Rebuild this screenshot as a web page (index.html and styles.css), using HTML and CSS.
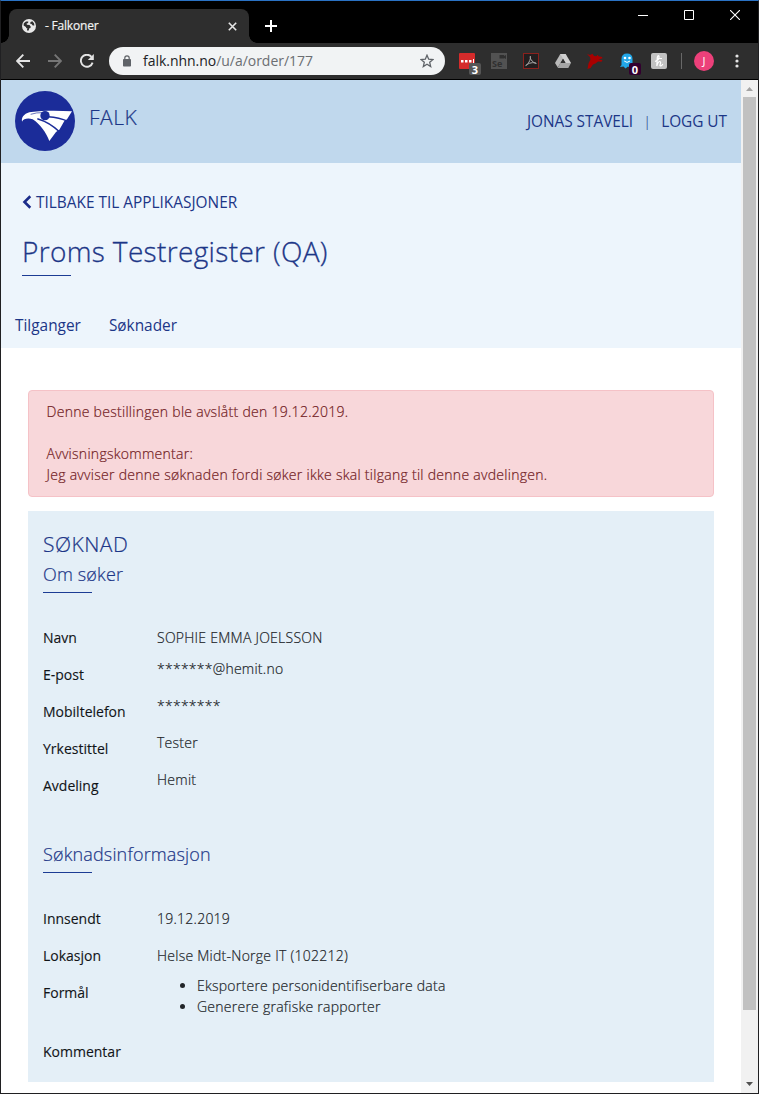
FILE: index.html
```html
<!DOCTYPE html>
<html lang="no">
<head>
<meta charset="utf-8">
<title>- Falkoner</title>
<link rel="stylesheet" href="styles.css">
</head>
<body>
<div class="window">
  <div class="titlebar">
    <div class="tab">
      <svg class="globe" viewBox="0 0 14 14"><circle cx="7" cy="7" r="7" fill="#e8e8e8"/><path d="M1.800 4.300L4 2.500L6.300 2.400L6.100 4L4.600 4.500L4.900 5.800L7.500 6L8.700 7.500L8.500 9L7 9.400L6.900 11.300L5.400 11.800L4.900 10.600L5.600 9.700L4.300 9.100L3.900 8L1.600 6.500zM8.600 3.100L10.300 2.300L12 4.300L12.400 6.600L10.800 6.400L9.500 5.100L8 4.600z" fill="#2e2e2e"/></svg>
      <span class="tab-title">- Falkoner</span>
      <svg class="tab-close" viewBox="0 0 9 9"><path d="M.8 .8L8.200 8.200M8.200 .8L.8 8.200" stroke="#e6e6e6" stroke-width="1.600"/></svg>
    </div>
    <svg class="plus" viewBox="0 0 12 12"><path d="M6 0V12M0 6H12" stroke="#fff" stroke-width="2"/></svg>
    <div class="controls">
      <svg width="10" height="10" viewBox="0 0 10 10"><path d="M0 5.500H10" stroke="#fff"/></svg>
      <svg width="10" height="10" viewBox="0 0 10 10"><path d="M.5 .5H9.500V9.500H.5z" stroke="#fff" fill="none"/></svg>
      <svg width="10" height="10" viewBox="0 0 10 10"><path d="M0 0L10 10M10 0L0 10" stroke="#fff" stroke-width="1.100"/></svg>
    </div>
  </div>
  <div class="toolbar">
    <svg class="nav" viewBox="0 0 14 14"><path d="M14 7H1.500M7.300 .7L1 7L7.300 13.300" fill="none" stroke="#e4e4e4" stroke-width="1.900"/></svg>
    <svg class="nav" viewBox="0 0 14 14"><path d="M0 7H12.500M6.700 .7L13 7L6.700 13.300" fill="none" stroke="#767676" stroke-width="1.900"/></svg>
    <svg class="nav" viewBox="0 0 14 14"><path d="M12.600 8.600A6 6 0 1 1 11.500 2.900" fill="none" stroke="#e4e4e4" stroke-width="1.900"/><path d="M13.800 0V6H7.800z" fill="#e4e4e4"/></svg>
    <div class="omnibox">
      <svg class="lock" viewBox="0 0 8 12"><rect y="4" width="8" height="7.500" rx=".8" fill="#5f6368"/><path d="M1.800 4.500V3A2.200 2.200 0 0 1 6.200 3V4.500" fill="none" stroke="#5f6368" stroke-width="1.200"/></svg>
      <span class="url"><span class="host">falk.nhn.no</span>/u/a/order/177</span>
      <svg class="star" viewBox="0 0 14 14"><path d="M7 1.200L8.700 5.200L13 5.500L9.700 8.300L10.700 12.600L7 10.300L3.300 12.600L4.300 8.300L1 5.500L5.300 5.200z" fill="none" stroke="#5f6368" stroke-width="1.300"/></svg>
    </div>
    <div class="extensions">
      <div class="ext"><svg viewBox="0 0 16 16"><rect width="16" height="16" rx="1" fill="#d52b2b"/><path d="M2 7h2.500v2.500H2zM6 7h2.500v2.500H6zM10 7h2.500v2.500H10zM14 6h1v4h-1z" fill="#fff"/></svg><span class="badge badge-gray">3</span></div>
      <div class="ext"><svg viewBox="0 0 16 16"><rect width="16" height="16" fill="#525252"/><text x="1" y="14" class="se">Se</text><path d="M8.500 2H13V3L15 2V6L13 5V5.500H8.500z" fill="#303030"/></svg></div>
      <div class="ext"><svg viewBox="0 0 16 16"><rect x=".5" y=".5" width="15" height="15" fill="#231f20" stroke="#8b211d"/><path d="M2.700 12.500C4.500 12.300 8.200 6.500 7.400 3.300C6.400 4.300 8.600 9.500 13.300 10.400C10.500 8.800 5.500 10 2.700 12.500z" fill="none" stroke="#aaa" stroke-width="1"/></svg></div>
      <div class="ext"><svg viewBox="0 0 16 16"><path d="M5.300 1H10.700L8 5.700L2.800 14.500L0 10z" fill="#b9b9b9"/><path d="M10.700 1L16 10H10.600L5.300 1z" fill="#d0d0d0"/><path d="M5.300 10H16L13.300 15H2.700z" fill="#a5a5a5"/><path d="M8 6L10.400 10H5.600z" fill="#333"/></svg></div>
      <div class="ext"><svg viewBox="0 0 16 16"><path d="M0 1L3 2L5.500 .8L7 3L9.500 3.300L10.500 1.800L11.700 3.300L15 4L15.500 5.300L11.500 6.500L15.500 7.300L14.500 8.700L11 8.500L8.500 10.500L6 11.500L3.500 15L.5 16L1.500 10.500L3.500 6.500L3 4z" fill="#a90000"/></svg></div>
      <div class="ext"><svg viewBox="0 0 16 16"><path d="M2.500 12V6Q2.500 .5 8 .5T13.500 6V13L11.500 15L9 13.500L6.500 15.500L4.500 13.500L1 14z" fill="#22a7e8"/><circle cx="6" cy="5" r="1.300" fill="#fff"/><circle cx="10.500" cy="5" r="1.300" fill="#fff"/><path d="M5.200 8Q8 10.800 11 8" fill="none" stroke="#fff"/></svg><span class="badge badge-purple">0</span></div>
      <div class="ext"><svg viewBox="0 0 16 16"><rect width="16" height="16" rx="2" fill="#c1c1c1"/><path d="M4 8.500Q8.500 6.500 8 3.500Q7 1.500 6.300 4.500L5.800 13Q7.200 8.300 8.800 8.500T8.900 12.300Q10.300 14 11.800 11M8.500 5.500H11" fill="none" stroke="#fff" stroke-width="1.200"/></svg></div>
    </div>
    <div class="divider"></div>
    <div class="avatar">J</div>
    <svg class="menu" viewBox="0 0 4 14"><circle cx="2" cy="2" r="1.600" fill="#e4e4e4"/><circle cx="2" cy="7" r="1.600" fill="#e4e4e4"/><circle cx="2" cy="12" r="1.600" fill="#e4e4e4"/></svg>
  </div>
  <div class="viewport">
    <main class="page">
      <header class="header">
        <svg class="logo" viewBox="45 47 180 180"><circle cx="135" cy="137" r="90" fill="#1b2c99"/><path d="M66 139C63 122 78 112 94 110C130 105 174 105 216 108L201 132L193 137L178 163L168 170L148 197C138 172 122 148 98 132C86 127 70 129 66 139z" fill="#fff"/><path d="M144 124Q178 126 204 138M112 130Q150 141 180 171" fill="none" stroke="#1b2c99" stroke-width="4.500"/><path d="M92 117Q110 111 128 112" fill="none" stroke="#1b2c99" stroke-width="2"/><circle cx="135" cy="121" r="14" fill="#1b2c99"/></svg>
        <span class="brand">FALK</span>
        <div class="user"><a>JONAS STAVELI</a><span class="sep">|</span><a>LOGG UT</a></div>
      </header>
      <section class="hero">
        <a class="back"><svg viewBox="0 0 10 14"><path d="M8.300 1.300L2.500 7L8.300 12.700" fill="none" stroke="#1b2c8a" stroke-width="2.600"/></svg><span class="back-text">TILBAKE TIL APPLIKASJONER</span></a>
        <h1 class="title"><span>Proms Testregister (QA)</span></h1>
        <nav class="tabs"><a>Tilganger</a><a>Søknader</a></nav>
      </section>
      <section class="content">
        <div class="alert">
          <p>Denne bestillingen ble avslått den 19.12.2019.</p>
          <p class="spaced">Avvisningskommentar:</p>
          <p>Jeg avviser denne søknaden fordi søker ikke skal tilgang til denne avdelingen.</p>
        </div>
        <div class="panel">
          <h2 class="panel-title">SØKNAD</h2>
          <h3 class="panel-sub">Om søker</h3>
          <dl class="fields">
            <dt>Navn</dt><dd class="level">SOPHIE EMMA JOELSSON</dd>
            <dt>E-post</dt><dd>*******@hemit.no</dd>
            <dt>Mobiltelefon</dt><dd>********</dd>
            <dt>Yrkestittel</dt><dd>Tester</dd>
            <dt>Avdeling</dt><dd>Hemit</dd>
          </dl>
          <h3 class="panel-sub">Søknadsinformasjon</h3>
          <dl class="fields">
            <dt>Innsendt</dt><dd class="level">19.12.2019</dd>
            <dt>Lokasjon</dt><dd class="level">Helse Midt-Norge IT (102212)</dd>
            <dt>Formål</dt><dd class="purpose"><ul><li>Eksportere personidentifiserbare data</li><li>Generere grafiske rapporter</li></ul></dd>
            <dt>Kommentar</dt><dd></dd>
          </dl>
        </div>
      </section>
    </main>
    <div class="scrollbar">
      <svg viewBox="0 0 17 17"><path d="M5 11L8.500 7L12 11z" fill="#a3a3a3"/></svg>
      <div class="thumb"></div>
      <svg viewBox="0 0 17 17"><path d="M5 6L8.500 10L12 6z" fill="#505050"/></svg>
    </div>
  </div>
</div>
</body>
</html>
```
FILE: styles.css
```css
* { box-sizing: border-box; }
body { margin: 0; background: #1c1c1e; font-family: "Open Sans", sans-serif; font-size: 14px; line-height: 21px; }
svg { display: block; flex: none; }
h1, h2, h3, p, dl, dd, ul { margin: 0; padding: 0; }
.window { width: 759px; height: 1094px; border: 1px solid #202022; border-top-color: #2a72c4; overflow: hidden; display: flex; flex-direction: column; }

.titlebar { height: 42px; background: #000; display: flex; flex: none; }
.tab { width: 240px; height: 34px; margin: 8px 0 0 8px; padding: 0 12px 0 13px; background: #2e2e2e; border-radius: 8px 8px 0 0; display: flex; align-items: center; position: relative; color: #f2f2f2; }
.tab::before, .tab::after { content: ""; position: absolute; bottom: 0; width: 8px; height: 8px; }
.tab::before { left: -8px; background: radial-gradient(circle at 0 0, transparent 7.5px, #2e2e2e 8px); }
.tab::after { right: -8px; background: radial-gradient(circle at 100% 0, transparent 7.5px, #2e2e2e 8px); }
.globe { width: 14px; height: 14px; }
.tab-title { margin-left: 9px; font: 12px/16px "Open Sans", sans-serif; letter-spacing: -.2px; flex: 1; -webkit-text-stroke: .2px; }
.tab-close { width: 9px; height: 9px; }
.plus { width: 12px; height: 12px; margin: 19px 0 0 16px; }
.controls { display: flex; gap: 36px; margin: 9px 18px 0 auto; }

.toolbar { height: 37px; flex: none; background: #2e2e2e; border-bottom: 1px solid #000; display: flex; align-items: center; padding: 0 19.500px 0 15px; }
.nav { width: 14px; height: 14px; margin-right: 18px; }
.omnibox { width: 336px; height: 28px; margin-left: -3px; border-radius: 14px; background: #f1f3f4; display: flex; align-items: center; padding: 0 11px 0 14px; }
.lock { width: 8px; height: 12px; }
.url { flex: 1; margin-left: 12px; font: 14px/20px "Open Sans", sans-serif; letter-spacing: -.03em; color: #6b6e72; letter-spacing: -.03px; }
.host { color: #202124; }
.star { width: 14px; height: 14px; }
.extensions { display: flex; gap: 16px; margin-left: 14px; }
.ext { width: 16px; height: 16px; position: relative; }
.ext svg { width: 16px; height: 16px; }
.se { font: bold 9px "Open Sans", sans-serif; fill: #303030; }
.badge { position: absolute; left: 10px; top: 10px; width: 12px; height: 12px; border-radius: 2px; color: #fff; font: bold 11px/13px "Open Sans", sans-serif; text-align: center; }
.badge-gray { background: #555; }
.badge-purple { background: #32002f; }
.divider { width: 1px; height: 16px; background: #686868; margin-left: 14px; }
.avatar { width: 20px; height: 20px; margin-left: 12px; border-radius: 50%; background: #ec407a; color: #fff; font: 11px/20px "Open Sans", sans-serif; text-align: center; }
.menu { width: 4px; height: 14px; margin-left: auto; }

.viewport { flex: 1; min-height: 0; display: flex; }
.page { width: 740px; background: #fff; overflow: hidden; }
.header { height: 83px; background: #c0d8ed; display: flex; align-items: center; padding: 0 14px; color: #1c3687; }
.logo { width: 60px; height: 60px; margin-top: -2px; }
.brand { margin: -9px 0 0 14px; font-size: 21px; line-height: 28px; font-weight: 300; letter-spacing: .5px; -webkit-text-stroke: .2px; }
.user { margin-left: auto; display: flex; font-size: 15.400px; letter-spacing: -.03px; }
.sep { width: 28px; text-align: center; font-weight: 300; }
.hero { height: 185px; background: #edf5fc; color: #1c3687; padding: 28px 14px 0; }
.back { display: flex; align-items: center; height: 22px; padding-left: 7px; font-size: 15.400px; }
.back svg { width: 10px; height: 14px; margin-right: 4px; }
.title { margin: 17px 0 0 7px; font-size: 28px; line-height: 42px; font-weight: 300; letter-spacing: .35px; -webkit-text-stroke: .3px; }
.title::after, .panel-sub::after { content: ""; display: block; width: 49px; height: 1px; background: #1c3c94; }
.title::after { margin-top: 3px; }
.tabs { display: flex; gap: 28px; margin-top: 39px; font-size: 15.400px; line-height: 22px; }

.content { padding: 42px 27px 0; font-weight: 300; letter-spacing: .25px; -webkit-text-stroke: .2px; }
.alert { width: 686px; height: 107px; border: 1px solid #f5c2c7; border-radius: 4px; background: #f8d7da; color: #721c24; padding: 10px 17.500px; letter-spacing: .28px; }
.spaced { margin-top: 21px; }
.panel { width: 686px; height: 571px; margin-top: 14px; padding: 18px 15px 0; background: #e4eff7; color: #212529; }
.panel-title { font-size: 21px; line-height: 31px; font-weight: 300; letter-spacing: .5px; color: #1c3687; }
.panel-sub { font-size: 18px; line-height: 28px; font-weight: 300; letter-spacing: .15px; color: #1c3687; }
.panel-sub::after { margin-top: 4px; }
.fields { display: grid; grid-template-columns: 114px 1fr; grid-auto-rows: 37px; margin-top: 34px; }
.fields + .panel-sub { margin-top: 28px; }
.fields + .panel-sub + .fields { margin-top: 35px; }
.fields dt { font-weight: 400; color: #111417; letter-spacing: 0; -webkit-text-stroke: .12px; }
.fields dd { margin-top: -6px; }
.fields .level { margin-top: 0; }
.fields .purpose { height: 65px; margin-top: -7px; }
.fields ul { padding-left: 40px; }
.panel .fields:last-child { grid-template-rows: 37px 37px 59px 37px; }

.scrollbar { width: 17px; background: #f1f1f1; display: flex; flex-direction: column; align-items: center; }
.scrollbar svg { width: 17px; height: 17px; }
.thumb { width: 13px; height: 913px; background: #c1c1c1; margin-bottom: auto; }
```
